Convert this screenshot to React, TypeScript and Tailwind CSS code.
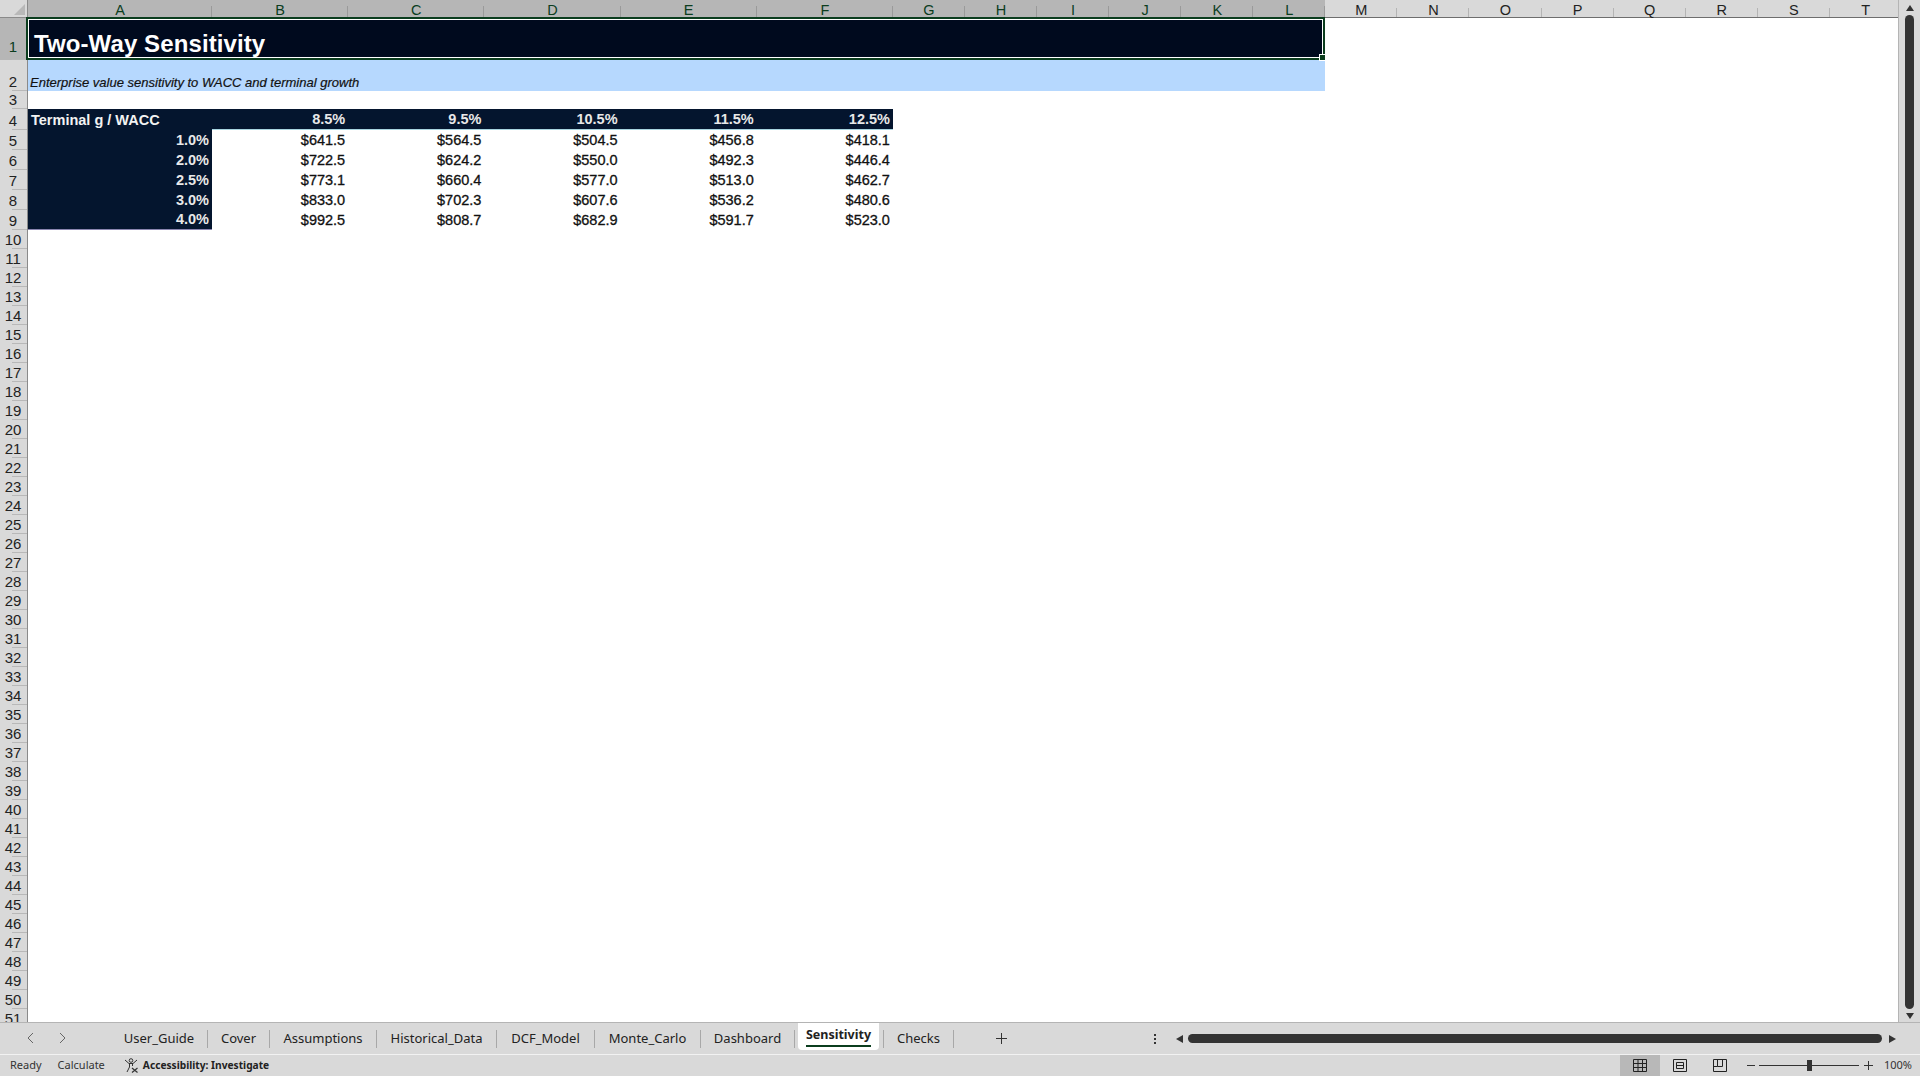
import { Fragment } from 'react';

const SANS = 'font-["Liberation_Sans",Arial,sans-serif]';

const columns = [
  { label: 'A', selected: true },
  { label: 'B', selected: true },
  { label: 'C', selected: true },
  { label: 'D', selected: true },
  { label: 'E', selected: true },
  { label: 'F', selected: true },
  { label: 'G', selected: true },
  { label: 'H', selected: true },
  { label: 'I', selected: true },
  { label: 'J', selected: true },
  { label: 'K', selected: true },
  { label: 'L', selected: true },
  { label: 'M', selected: false },
  { label: 'N', selected: false },
  { label: 'O', selected: false },
  { label: 'P', selected: false },
  { label: 'Q', selected: false },
  { label: 'R', selected: false },
  { label: 'S', selected: false },
  { label: 'T', selected: false },
];

const waccs = ['8.5%', '9.5%', '10.5%', '11.5%', '12.5%'];

const sensitivity = [
  { g: '1.0%', values: ['$641.5', '$564.5', '$504.5', '$456.8', '$418.1'] },
  { g: '2.0%', values: ['$722.5', '$624.2', '$550.0', '$492.3', '$446.4'] },
  { g: '2.5%', values: ['$773.1', '$660.4', '$577.0', '$513.0', '$462.7'] },
  { g: '3.0%', values: ['$833.0', '$702.3', '$607.6', '$536.2', '$480.6'] },
  { g: '4.0%', values: ['$992.5', '$808.7', '$682.9', '$591.7', '$523.0'] },
];

const tabs = [
  { name: 'User_Guide', width: 'w-[97px]' },
  { name: 'Cover', width: 'w-[62px]' },
  { name: 'Assumptions', width: 'w-[107px]' },
  { name: 'Historical_Data', width: 'w-[120px]' },
  { name: 'DCF_Model', width: 'w-[98px]' },
  { name: 'Monte_Carlo', width: 'w-[106px]' },
  { name: 'Dashboard', width: 'w-[94px]' },
  { name: 'Sensitivity', width: 'w-[89px]' },
  { name: 'Checks', width: 'w-[70px]' },
];

const emptyRows = Array.from({ length: 42 }, (_, i) => i + 10);

const RowHead = ({ n, selected = false, tall = false }: { n: number; selected?: boolean; tall?: boolean }) => (
  <div
    className={`relative flex items-end justify-center border-r border-[#8a8a8a] pr-[1px] text-[15px] leading-[18px] ${tall ? 'pb-[4px]' : ''} ${selected ? 'bg-[#b6b6b6] text-[#0b3d1e]' : 'bg-[#d9d9d9] text-[#222]'}`}
  >
    {n}
    <span className="absolute right-0 bottom-0 h-px w-[15px] bg-[#b8b8b8]" />
  </div>
);

const AccessibilityIcon = () => (
  <svg width="15" height="15" viewBox="0 0 15 15" fill="none" stroke="#333" strokeWidth="1">
    <circle cx="7" cy="2.500" r="1.800" />
    <path d="M1 2 L5 5.500 H9 L13 2 M5.500 5.500 L5.500 9 L3 14 M8.500 5.500 V8" />
    <path d="M8 10 L13.500 14.500 M13.500 10 L8 14.500" strokeWidth="1.200" />
  </svg>
);

export default function App() {
  return (
    <div className={`flex h-[1076px] w-[1920px] flex-col overflow-hidden bg-[#d9d9d9] ${SANS}`}>
      <div className="flex min-h-0 flex-1">
        <div className="min-w-0 flex-1 overflow-hidden bg-white">
          <div className="grid grid-cols-[28px_184px_repeat(5,136.2px)_repeat(14,72.07px)] grid-rows-[18px_42px_31px_18px_21px_repeat(5,20px)_repeat(42,19px)]">
            {/* column headers */}
            <div className="relative border-r border-b border-[#8a8a8a] bg-[#d9d9d9]">
              <span className="absolute right-[2px] bottom-[2px] h-0 w-0 border-b-[11px] border-l-[11px] border-b-[#b8b8b8] border-l-transparent" />
            </div>
            {columns.map((col) => (
              <div
                key={col.label}
                className={`relative flex items-end justify-center text-[14.5px] leading-[14px] ${col.selected ? 'bg-[#b6b6b6] pb-[1px] text-[#0b3d1e]' : 'border-b border-[#6e6e6e] bg-[#d9d9d9] text-[#222]'}`}
              >
                {col.label}
                <span className={`absolute right-0 bottom-0 w-px ${col.selected ? 'h-[12px] bg-[#9a9a9a]' : 'h-[9px] bg-[#b4b4b4]'}`} />
              </div>
            ))}

            {/* row 1 */}
            <RowHead n={1} selected tall />
            <div className="relative col-span-12 flex items-end bg-[#000a1e] pb-[2px] pl-[6px]">
              <span className="text-[24px] leading-[28px] font-bold tracking-[0.1px] text-white">Two-Way Sensitivity</span>
              {/* selection outline */}
              <div className="absolute -top-[1px] -left-[2px] right-0 bottom-0 border-2 border-[#0b3d1e]">
                <div className="absolute inset-0 border border-white" />
                <span className="absolute -right-[3px] -bottom-[3px] h-[7px] w-[7px] border border-white bg-[#0b3d1e]" />
              </div>
            </div>
            <div className="col-span-8" />

            {/* row 2 */}
            <RowHead n={2} />
            <div className="col-span-12 flex items-end bg-[#b6d8fe] pl-[2px] text-[13px] leading-[16px] text-[#111] italic [-webkit-text-stroke:0.2px_#111]">
              Enterprise value sensitivity to WACC and terminal growth
            </div>
            <div className="col-span-8" />

            {/* row 3 */}
            <RowHead n={3} />
            <div className="col-span-20" />

            {/* row 4 */}
            <RowHead n={4} />
            <div className="flex items-center bg-[#04152e] pt-[2px] pl-[3px] text-[14.5px] font-bold text-[#f2f2f2]">Terminal g / WACC</div>
            {waccs.map((w) => (
              <div key={w} className="flex items-center justify-end border-b border-[#a9d5e0] bg-[#04152e] pt-[2px] pr-[3px] text-[14.5px] font-bold text-[#e8e8e8]">
                {w}
              </div>
            ))}
            <div className="col-span-14" />

            {/* rows 5 to 9 */}
            {sensitivity.map((row, i) => (
              <Fragment key={row.g}>
                <RowHead n={i + 5} />
                <div className={`flex items-center justify-end bg-[#04152e] pt-[1px] pr-[3px] text-[14.5px] font-bold text-[#e8e8e8] ${i === 4 ? 'border-b border-[#8a85b0]' : ''}`}>{row.g}</div>
                {row.values.map((v) => (
                  <div key={v} className="flex items-center justify-end pt-[1px] pr-[3px] text-[14.5px] text-[#111] [-webkit-text-stroke:0.3px_#111]">
                    {v}
                  </div>
                ))}
                <div className="col-span-14" />
              </Fragment>
            ))}

            {/* empty rows */}
            {emptyRows.map((n) => (
              <Fragment key={n}>
                <RowHead n={n} />
                <div className="col-span-20" />
              </Fragment>
            ))}
          </div>
        </div>

        {/* vertical scrollbar */}
        <div className="flex w-[22px] flex-col items-center border-l border-[#b4b4b4] bg-[#d9d9d9] pt-[5px] pb-[3px]">
          <span className="h-0 w-0 border-x-[4.5px] border-b-[6px] border-x-transparent border-b-[#333]" />
          <span className="mt-[4px] w-[9px] flex-1 rounded-full bg-[#333]" />
          <span className="mt-[4px] h-0 w-0 border-x-[4.5px] border-t-[6px] border-x-transparent border-t-[#333]" />
        </div>
      </div>

      {/* sheet tabs */}
      <div className="flex h-[32px] items-center border-t border-[#b4b4b4] font-['Noto_Sans',sans-serif] text-[13px] text-[#222]">
        <div className="flex w-[111px] items-center gap-[23px] pb-[2px] pl-[26px] text-[#666]">
          <svg width="9" height="12" viewBox="0 0 9 12" fill="none" stroke="currentColor"><path d="M7 1 L2 6 L7 11" /></svg>
          <svg width="9" height="12" viewBox="0 0 9 12" fill="none" stroke="currentColor"><path d="M2 1 L7 6 L2 11" /></svg>
        </div>
        {tabs.map((tab) =>
          tab.name === 'Sensitivity' ? (
            <div key={tab.name} className={`flex h-[18px] items-center self-center border-r border-[#a8a8a8] ${tab.width}`}>
              <div className="ml-[3px] flex h-[27px] w-[81px] -translate-y-[2px] flex-col items-center rounded-b-[4px] bg-white pt-[2px] text-[12.5px] font-bold">
                <span className="leading-[20px]">{tab.name}</span>
                <span className="h-[2px] w-[65px] bg-[#0b3d1e]" />
              </div>
            </div>
          ) : (
            <div key={tab.name} className={`flex h-[18px] items-center justify-center border-r border-[#a8a8a8] pb-[2px] leading-[16px] ${tab.width}`}>
              {tab.name}
            </div>
          ),
        )}
        <svg className="ml-[41px]" width="13" height="13" viewBox="0 0 13 13" stroke="#333"><path d="M6.500 1 V12 M1 6.500 H12" /></svg>
        <div className="ml-[146px] flex flex-col gap-[2px]">
          <span className="h-[2px] w-[2px] bg-[#333]" />
          <span className="h-[2px] w-[2px] bg-[#333]" />
          <span className="h-[2px] w-[2px] bg-[#333]" />
        </div>
        <span className="ml-[20px] h-0 w-0 border-y-[4.5px] border-r-[7px] border-y-transparent border-r-[#333]" />
        <span className="ml-[5px] h-[9px] flex-1 rounded-full bg-[#333]" />
        <span className="mr-[24px] ml-[7px] h-0 w-0 border-y-[4.5px] border-l-[7px] border-y-transparent border-l-[#333]" />
      </div>

      {/* status bar */}
      <div className="flex h-[22px] items-center border-t border-[#f2f2f2] font-['Noto_Sans',sans-serif] text-[11px] text-[#333]">
        <span className="pl-[10px]">Ready</span>
        <span className="pl-[16px]">Calculate</span>
        <span className="flex items-center gap-[4px] pl-[19px] text-[10.2px] font-bold text-[#222]">
          <AccessibilityIcon />
          Accessibility: Investigate
        </span>
        <div className="ml-auto flex h-full items-center">
          <div className="flex h-full w-[40px] items-center justify-center bg-[#b8b8b8]">
            <svg width="14" height="13" viewBox="0 0 14 13" fill="none" stroke="#222"><path d="M.5.5h13v12H.5zM.5 4.500h13M.5 8.500h13M5 .5v12M9.500.5v12" /></svg>
          </div>
          <div className="flex h-full w-[40px] items-center justify-center">
            <svg width="14" height="13" viewBox="0 0 14 13" fill="none" stroke="#222"><path d="M.5.5h13v12H.5zM3.500 3.500h7v6h-7zM3.500 6.500h7" /></svg>
          </div>
          <div className="flex h-full w-[40px] items-center justify-center">
            <svg width="14" height="13" viewBox="0 0 14 13" fill="none" stroke="#222"><path d="M.5.5h13v12H.5zM.5 7.500h4V.5M4.500 7.500h5V.5" /></svg>
          </div>
          <span className="ml-[7px] h-px w-[8px] bg-[#333]" />
          <div className="relative ml-[4px] flex h-full w-[100px] items-center">
            <span className="h-px w-full bg-[#333]" />
            <span className="absolute top-[5px] left-[48px] h-[11px] w-[5px] bg-[#333]" />
          </div>
          <svg className="ml-[5px]" width="9" height="9" viewBox="0 0 9 9" stroke="#333"><path d="M4.500 0 V9 M0 4.500 H9" /></svg>
          <span className="ml-[7px] w-[40px] pr-[8px] text-right">100%</span>
        </div>
      </div>
    </div>
  );
}
